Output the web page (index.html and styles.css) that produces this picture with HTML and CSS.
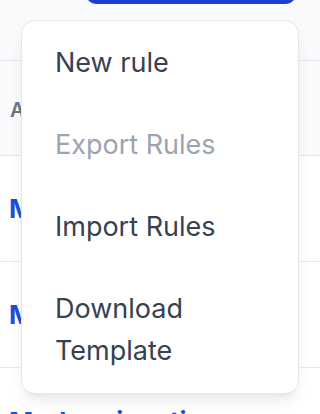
FILE: index.html
```html
<!DOCTYPE html>
<html lang="en">

<head>
    <meta charset="UTF-8">
    <meta name="viewport" content="width=device-width, initial-scale=1.0">
    <title>Rules</title>
    <link rel="stylesheet" href="styles.css">
</head>

<body>

    <main class="page">

        <header class="toolbar">
            <div class="btn-primary" aria-label="Actions"></div>
        </header>

        <section class="rules-table">
            <div class="table-head">Action</div>
            <div class="table-row"><a class="row-link">Mark as spam</a></div>
            <div class="table-row"><a class="row-link">Mark as read</a></div>
            <div class="table-row"><a class="row-link">Mark as inactive</a></div>
        </section>

        <nav class="dropdown">
            <div class="dropdown-item">New rule</div>
            <div class="dropdown-item disabled">Export Rules</div>
            <div class="dropdown-item">Import Rules</div>
            <div class="dropdown-item">Download Template</div>
        </nav>

    </main>

</body>

</html>
```

FILE: styles.css
```css
/*      Variables       */
:root {
    --bg-soft: #f9fafb;
    --line: #e5e7eb;
    --text: #374151;
    --text-muted: #9ca3af;
    --blue: #1d3fcf;
    --link: #1d4ed8;
}

/*      Reset Styles    */
html {
    padding: 0;
    margin: 0;
    box-sizing: border-box;
    font-family: Inter, "Noto Sans", sans-serif;
}

body {
    padding: 0;
    margin: 0;
    overflow: hidden;
    background-color: #fff;
}

*,
*::before,
*::after {
    box-sizing: inherit;
}

.page {
    position: relative;
    height: 414px;
    overflow: hidden;
}

.toolbar {
    height: 61px;
    background-color: var(--bg-soft);
    border-bottom: 1px solid var(--line);

    display: flex;
    justify-content: flex-end;
    padding-right: 23px;
}

.btn-primary {
    width: 212px;
    height: 40px;
    margin-top: -36px;
    border-radius: 12px;
    background-color: var(--blue);
}

.table-head {
    height: 95px;
    background-color: var(--bg-soft);
    border-bottom: 1px solid var(--line);
    padding-left: 10px;
    padding-top: 4px;

    display: flex;
    align-items: center;

    color: #6b7280;
    font-size: 20px;
    font-weight: 600;
    text-transform: uppercase;
}

.table-row {
    height: 106px;
    border-bottom: 1px solid var(--line);
    padding-left: 9px;

    display: flex;
    align-items: center;
}

.row-link {
    color: var(--link);
    font-size: 26px;
    font-weight: 700;
    white-space: nowrap;
}

.table-row:last-child {
    align-items: flex-start;
    padding-top: 38px;
}

.dropdown {
    position: absolute;
    top: 20px;
    left: 21px;
    width: 278px;

    background-color: #fff;
    border: 1px solid var(--line);
    border-radius: 14px;
    box-shadow: 0 10px 15px -3px rgba(0, 0, 0, .08), 0 4px 6px -4px rgba(0, 0, 0, .06);
    padding: 1px 0;
}

.dropdown-item {
    padding: 20px 33px;
    font-size: 27px;
    line-height: 42px;
    color: var(--text);
}

.dropdown-item.disabled {
    color: var(--text-muted);
}
```
